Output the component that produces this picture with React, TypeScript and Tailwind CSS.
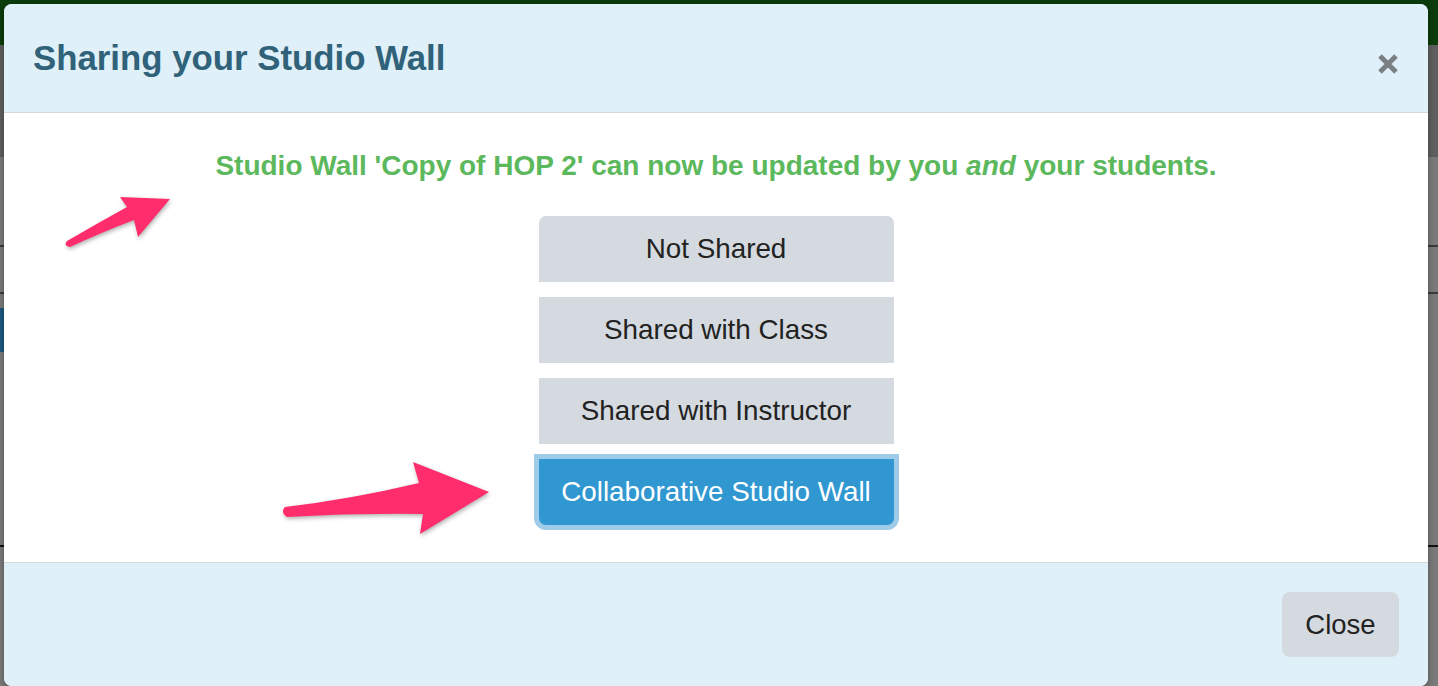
import React from 'react';

const font = { fontFamily: '"Liberation Sans", Arial, Helvetica, sans-serif' };

function CloseX() {
  return (
    <svg width="22" height="22" viewBox="0 0 22 22" className="block">
      <path d="M3 3 L19 19 M19 3 L3 19" stroke="#7b8084" strokeWidth="5" strokeLinecap="butt" />
    </svg>
  );
}

function Arrows() {
  return (
    <svg
      className="absolute inset-0 pointer-events-none drop-shadow-[1px_2px_2px_rgba(0,0,0,0.3)]"
      width="1438"
      height="686"
      viewBox="0 0 1438 686"
    >
      <path
        d="M67,241 Q98,223 127,207 L120,197 L170,199 L138,237 L134,220 Q100,233 70,247 Q63,246 67,241 Z"
        fill="#ff2d6b"
      />
      <path
        d="M285,507 Q352,499 419,483 L413,462 L489,492 L420,534 L423,514 Q355,513 287,517 Q280,512 285,507 Z"
        fill="#ff2d6b"
      />
    </svg>
  );
}

const options = ['Not Shared', 'Shared with Class', 'Shared with Instructor'];

export default function App() {
  return (
    <div className="relative w-[1438px] h-[686px] overflow-hidden bg-[#7a7a7a]" style={font}>
      {/* backdrop */}
      <div className="flex flex-col">
        <div className="h-[45px] bg-[#0b3c0b]" />
        <div className="h-[112px] bg-[#5f5f5f]" />
        <div className="h-[88px] bg-[#7a7a7a]" />
        <div className="h-[2px] bg-[#3a3a3a]" />
        <div className="h-[45px] bg-[#7a7a7a]" />
        <div className="h-[2px] bg-[#3a3a3a]" />
        <div className="h-[14px] bg-[#7a7a7a]" />
        <div className="h-[44px] bg-[#7a7a7a] flex">
          <div className="w-[6px] bg-[#1c5a80]" />
        </div>
        <div className="h-[193px] bg-[#7a7a7a]" />
        <div className="h-[2px] bg-[#111]" />
      </div>

      {/* modal */}
      <div className="absolute left-[4px] top-[4px] w-[1424px] h-[682px] rounded-[8px] overflow-hidden bg-white flex flex-col shadow-[0_2px_6px_rgba(0,0,0,0.35)]">
        <div className="h-[109px] shrink-0 bg-[#dff0f8] border-b border-[#d3dade] flex items-start justify-between pl-[29px] pr-[29px]">
          <h4 className="mt-[33px] text-[34.8px] leading-[42px] font-bold text-[#30627a]">
            Sharing your Studio Wall
          </h4>
          <button className="mt-[49px]">
            <CloseX />
          </button>
        </div>

        <div className="h-[450px] shrink-0 flex flex-col items-center pt-[33px] border-b border-[#d3dade]">
          <p className="text-[28px] leading-[40px] font-bold text-[#5cb85c]">
            Studio Wall 'Copy of HOP 2' can now be updated by you <em>and</em> your students.
          </p>
          <div className="mt-[30px] flex flex-col gap-[15px] w-[355px]">
            {options.map((o, i) => (
              <button
                key={o}
                className={
                  'h-[66px] bg-[#d4dadf] text-[#222] text-[27.8px] ' +
                  (i === 0 ? 'rounded-t-[7px]' : '')
                }
              >
                {o}
              </button>
            ))}
            <button className="h-[66px] bg-[#3097d1] text-white text-[27.8px] rounded-b-[7px] ring-[5px] ring-[#9dcbe8]">
              Collaborative Studio Wall
            </button>
          </div>
        </div>

        <div className="flex-1 bg-[#dff0f8] flex justify-end items-start pt-[29px] pr-[29px]">
          <button className="w-[117px] h-[65px] rounded-[8px] bg-[#d4dadf] text-[#222] text-[27.5px]">
            Close
          </button>
        </div>
      </div>

      <Arrows />
    </div>
  );
}
